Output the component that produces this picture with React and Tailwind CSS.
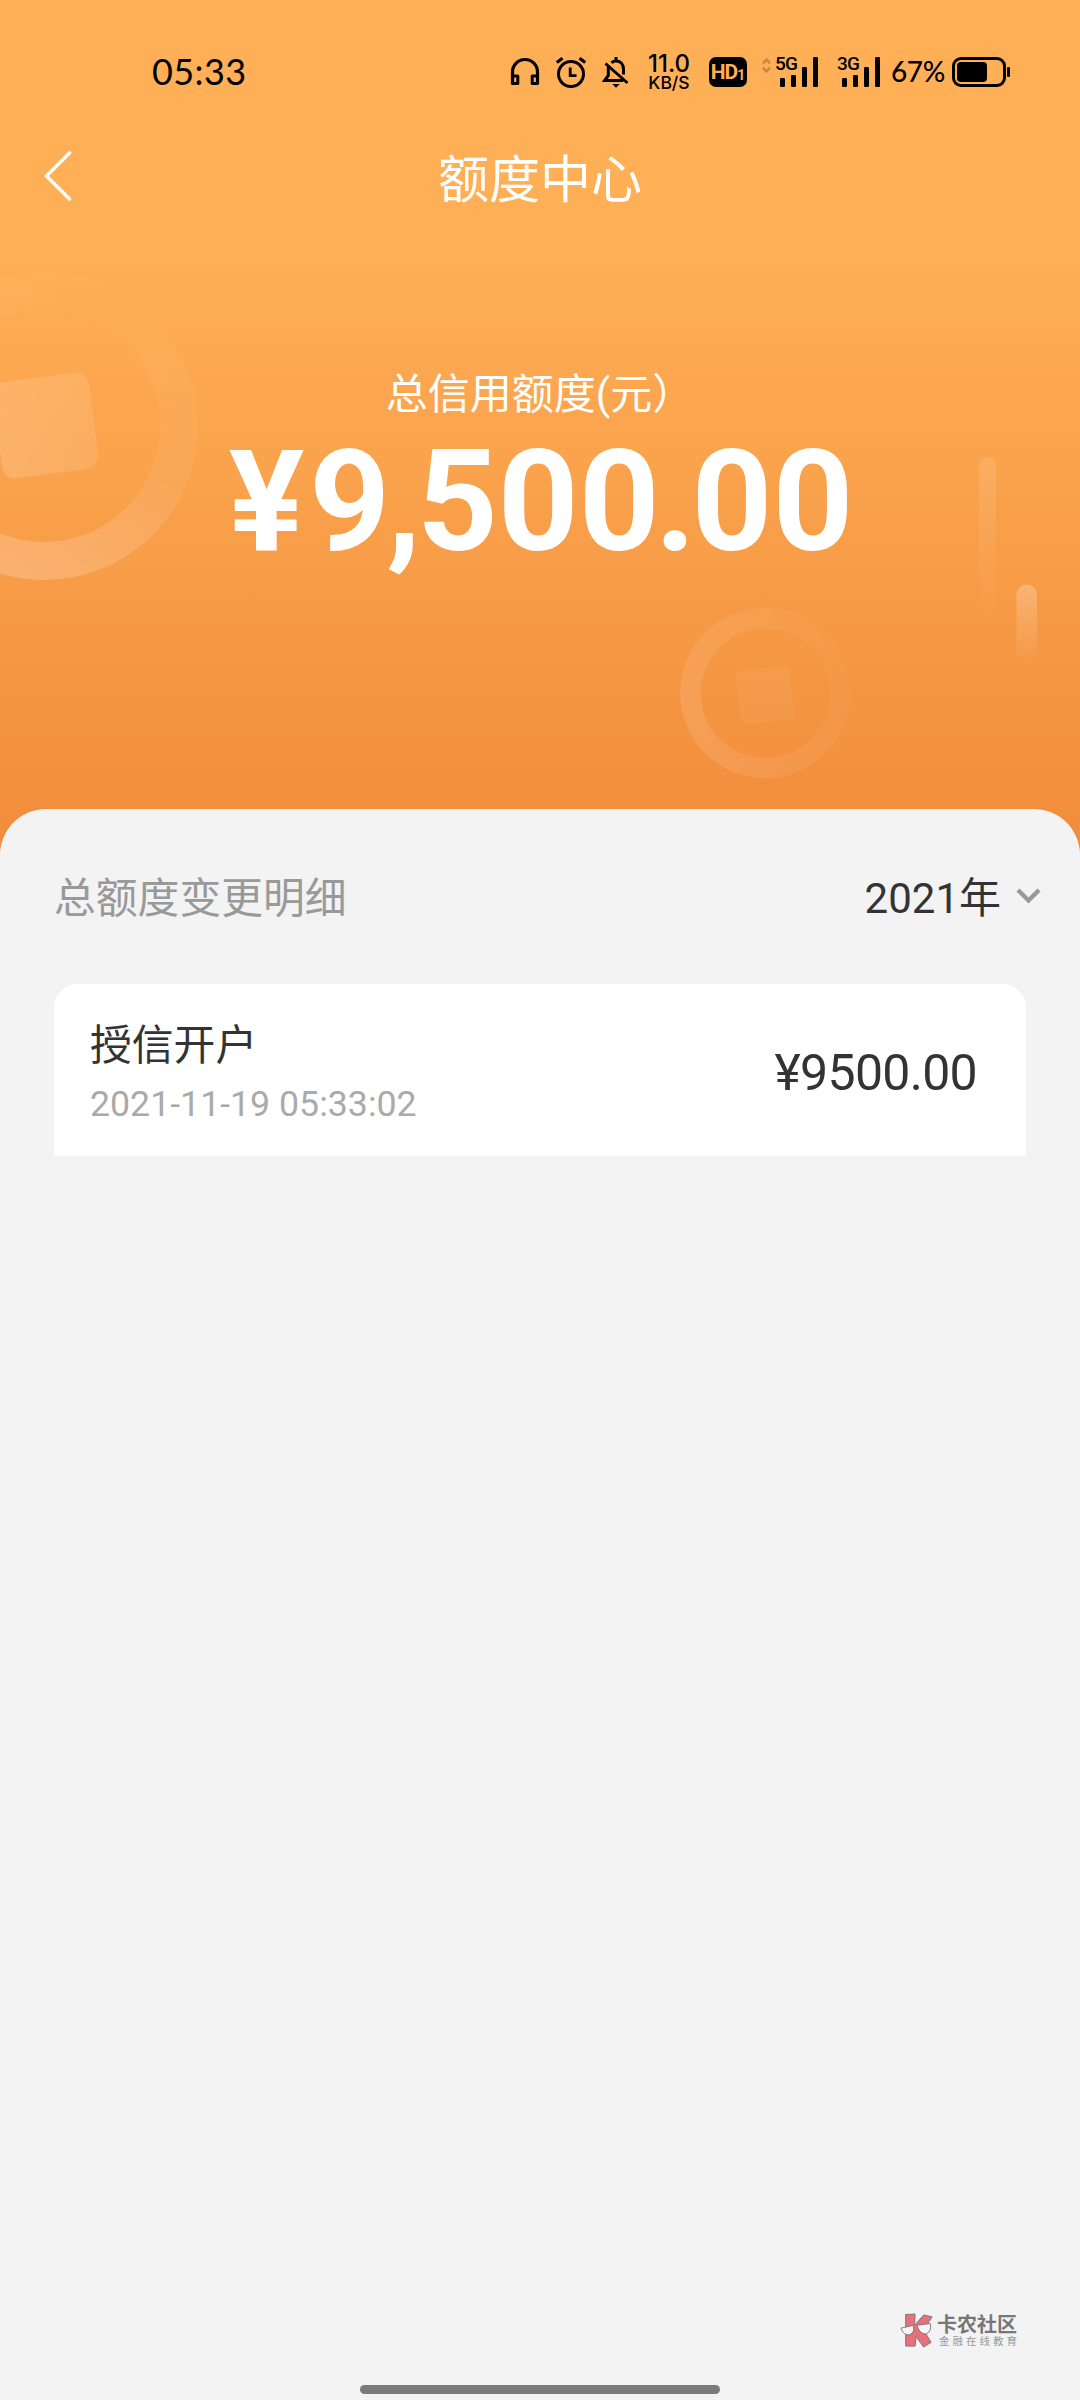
import clsx from "clsx";

const records = [{ id: 1, title: "授信开户", time: "2021-11-19 05:33:02", amount: "¥9500.00" }];

// Four rising bars with the network type above the short ones
const Signal = ({ label, className }) => (
  <div className={clsx("relative h-[30px] w-[43px]", className)}>
    <span className="absolute -top-[3px] left-0 font-[Roboto] text-[19px] leading-5 font-medium tracking-[-0.8px]">{label}</span>
    <svg className="absolute bottom-0 left-[5px]" width="38" height="30" viewBox="0 0 38 30" fill="currentColor">
      <rect x="0" y="21" width="5" height="9" rx="1.2" />
      <rect x="11" y="18" width="5" height="12" rx="1.2" />
      <rect x="22" y="10" width="5" height="20" rx="1.2" />
      <rect x="33" y="0" width="5" height="30" rx="1.2" />
    </svg>
  </div>
);

const StatusBar = () => (
  <div className="flex h-[144px] items-start pt-[57px] text-black">
    <span className="ml-[152px] w-[358px] font-[Lato] text-[36px] leading-[29px] tracking-[0.4px]">05:33</span>
    {/* headphones */}
    <svg width="30" height="30" viewBox="0 0 30 30" fill="none" stroke="currentColor" strokeWidth="3.2">
      <path d="M2.5 27V15a12.5 12.5 0 0 1 25 0v12" />
      <path d="M2.5 19h5.3v7.5H2.5zM27.5 19h-5.3v7.5h5.3z" strokeWidth="3" strokeLinejoin="round" />
    </svg>
    {/* alarm */}
    <svg className="ml-[15px]" width="32" height="32" viewBox="0 0 32 32" fill="none" stroke="currentColor" strokeWidth="3">
      <circle cx="16" cy="17" r="12.5" />
      <path d="M15.2 10.5v8.2h6.3" strokeWidth="2.8" />
      <path d="M1.8 5.6 7.5 1.2M30.2 5.6 24.5 1.2" strokeWidth="3.2" />
    </svg>
    {/* muted bell */}
    <svg className="ml-[15px]" width="28" height="32" viewBox="0 0 28 32" fill="none" stroke="currentColor" strokeWidth="3">
      <path d="M14 0v4.5M9.5 5.8Q11.4 4 14 4c5 0 7.5 3.6 7.5 8.5v5" />
      <path d="M6.3 9.5v9L2.6 23.5h18.6" />
      <path d="M3.5 6.5 25.5 26" />
      <path d="M10.3 27h7.4L14 30.7z" fill="currentColor" stroke="none" />
    </svg>
    <div className="ml-[16px] -mt-[4px] flex w-[46px] flex-col items-center font-[Inter] font-medium">
      <span className="text-[24px] leading-[22px]">11.0</span>
      <span className="text-[17.5px] leading-[16px]">KB/S</span>
    </div>
    <div className="ml-[17px] flex h-[30px] w-[38px] items-center justify-center rounded-[7px] bg-black font-[Roboto] font-bold text-[#ffaf56]">
      <span className="text-[21px] leading-[30px] tracking-[-1px]">HD</span>
      <span className="mt-[6px] text-[14px] leading-none">1</span>
    </div>
    <svg className="ml-[15px] mt-[1px]" width="9" height="15" viewBox="0 0 9 15" fill="none" stroke="#c98743" strokeWidth="2.6">
      <path d="m1 5.5 3.5-4 3.5 4M1 9.5l3.5 4 3.5-4" />
    </svg>
    <Signal label="5G" className="ml-[4px]" />
    <Signal label="3G" className="ml-[19px]" />
    <span className="ml-[11px] w-[61px] font-[Lato] text-[28px] leading-[28px] font-medium tracking-[-0.4px]">67%</span>
    <svg width="58" height="30" viewBox="0 0 58 30">
      <rect x="1.5" y="1.5" width="51" height="27" rx="7.5" fill="none" stroke="currentColor" strokeWidth="3" />
      <rect x="5" y="5" width="30" height="20" rx="4" fill="currentColor" />
      <rect x="55" y="10" width="3" height="10" rx="1.2" fill="currentColor" />
    </svg>
  </div>
);

// Faded coins and light streaks behind the amount
const Decorations = () => (
  <svg className="absolute inset-0" width="1080" height="880" viewBox="0 0 1080 880">
    <defs>
      <linearGradient id="coin" x1="0.2" y1="1" x2="0.6" y2="0">
        <stop offset="0" stopColor="#fff" stopOpacity="0.22" />
        <stop offset="0.5" stopColor="#fff" stopOpacity="0.07" />
        <stop offset="1" stopColor="#fff" stopOpacity="0.015" />
      </linearGradient>
      <linearGradient id="hole" x1="0" y1="0.6" x2="1" y2="0.4">
        <stop offset="0" stopColor="#fff" stopOpacity="0.16" />
        <stop offset="1" stopColor="#fff" stopOpacity="0.1" />
      </linearGradient>
      <linearGradient id="smallCoin" x1="0" y1="0.7" x2="1" y2="0.3">
        <stop offset="0" stopColor="#fff" stopOpacity="0.11" />
        <stop offset="1" stopColor="#fff" stopOpacity="0.02" />
      </linearGradient>
      <linearGradient id="streak" x1="0" y1="0" x2="0" y2="1">
        <stop offset="0" stopColor="#fff" stopOpacity="0.12" />
        <stop offset="1" stopColor="#fff" stopOpacity="0" />
      </linearGradient>
      <linearGradient id="streakBright" x1="0" y1="0" x2="0" y2="1">
        <stop offset="0" stopColor="#fff" stopOpacity="0.25" />
        <stop offset="1" stopColor="#fff" stopOpacity="0" />
      </linearGradient>
    </defs>
    <circle cx="44" cy="426" r="135" fill="none" stroke="url(#coin)" strokeWidth="38" />
    <rect x="-3" y="377" width="97" height="97" rx="13" fill="url(#hole)" transform="rotate(-7.5 45 426)" />
    <circle cx="765.5" cy="693" r="75" fill="none" stroke="url(#smallCoin)" strokeWidth="20.5" />
    <rect x="738" y="668" width="54" height="54" rx="5" fill="#fff" fillOpacity="0.05" transform="rotate(-7 765 695)" />
    <rect x="979" y="457" width="17" height="172" rx="8.5" fill="url(#streak)" />
    <rect x="1016.5" y="584.5" width="20.5" height="80" rx="10" fill="url(#streakBright)" />
  </svg>
);

const Header = () => (
  <div className="relative h-[890px] bg-linear-to-b from-[#ffaf56] from-[28%] to-[#f18c3b] to-[95%] text-white">
    <Decorations />
    <div className="relative">
      <StatusBar />
      <div className="flex h-[66px] items-center">
        <svg className="-mt-[2px] ml-[43px]" width="30" height="50" viewBox="0 0 30 50" fill="none" stroke="currentColor" strokeWidth="3.4" strokeLinecap="round" strokeLinejoin="round">
          <path d="M26.5 2 3.5 25l23 23" />
        </svg>
        <h1 className="mr-[73px] flex-1 pt-[7px] text-center text-[51px] leading-[59px]">额度中心</h1>
      </div>
      <p className="mt-[155px] text-center text-[42px] leading-[60px]">总信用额度(元）</p>
      <p className="mt-[12px] pl-[2px] text-center font-[Roboto] text-[141px] leading-[130px] font-bold">
        <span className="tracking-[5px]">¥</span>
        <span className="tracking-[-4px]">9,</span>
        <span>50</span>
        <span className="tracking-[-4.5px]">0.</span>
        <span>00</span>
      </p>
    </div>
  </div>
);

const RecordItem = ({ title, time, amount }) => (
  <div className="flex h-[172px] items-center justify-between rounded-t-[24px] bg-white pt-[5px] pr-[49px] pl-[36px]">
    <div className="pt-[2px]">
      <div className="text-[41.8px] leading-[60px] text-[#333]">{title}</div>
      <div className="text-[35.7px] leading-[56px] text-[#aaa]">{time}</div>
    </div>
    <div className="text-[50px] leading-[60px] tracking-[-0.7px] text-[#333]">{amount}</div>
  </div>
);

const Watermark = () => (
  <div className="flex items-center gap-[3px] text-[#777]">
    <svg width="34" height="36" viewBox="0 0 36 38" stroke="#777" strokeWidth="1">
      <path d="M6 1.5 16 1l-.5 12L25 2l9 2-9 14 8 13-8 5-8-11-1 10H6z" fill="#e8707a" />
      <path d="M1 16 14 13q2 8-4 10-6 1-9-7zM18 13l14-2q2 8-4 11-7 1-10-9z" fill="#f6f4f4" />
    </svg>
    <div className="flex w-[82px] flex-col">
      <span className="text-[20px] leading-[22px] font-bold">卡农社区</span>
      <span className="ml-[2px] text-[10.5px] leading-[12px] tracking-[3px] whitespace-nowrap text-[#999]">金融在线教育</span>
    </div>
  </div>
);

const App = () => {
  return (
    <div className="flex h-[2400px] w-[1080px] flex-col overflow-hidden bg-[#f3f3f3] font-[Roboto,'Noto_Sans_CJK_SC',sans-serif]">
      <Header />
      <div className="relative -mt-[81px] flex flex-1 flex-col rounded-t-[46px] bg-[#f3f3f3] px-[54px]">
        <div className="-mr-[15px] flex h-[175px] items-center justify-between pt-[5px]">
          <h2 className="text-[41.8px] leading-[60px] text-[#999]">总额度变更明细</h2>
          <div className="flex items-center gap-[15px] text-[42px] leading-[60px] text-[#333]">
            2021年
            <svg className="-mt-[7px]" width="25" height="16" viewBox="0 0 25 16" fill="none" stroke="#999" strokeWidth="4.4">
              <path d="m2 2 10.5 10.5L23 2" />
            </svg>
          </div>
        </div>
        {records.map((item) => (
          <RecordItem key={item.id} {...item} />
        ))}
        <div className="mt-auto mr-[7px] flex justify-end pb-[36px]">
          <Watermark />
        </div>
        <div className="mx-auto mb-[6px] h-[9px] w-[360px] rounded-full bg-[#7a7a7a]" />
      </div>
    </div>
  );
};

export default App;
